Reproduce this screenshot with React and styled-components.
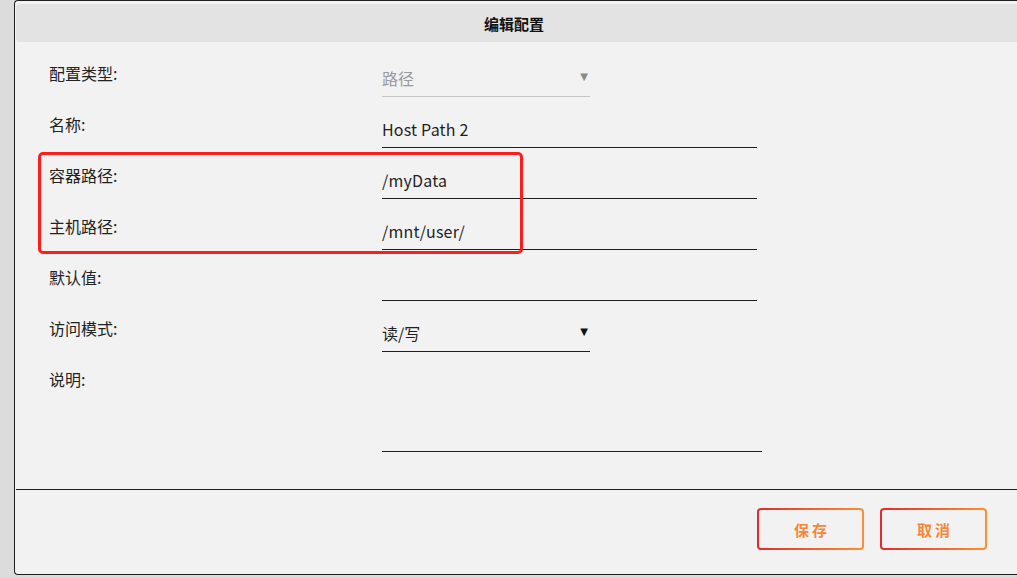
import React from 'react';
import styled, { createGlobalStyle } from 'styled-components';

const textColor = '#1f1f1f';
const panelBg = '#f2f2f2';
const pageBg = '#dcdcdc';

const GlobalStyle = createGlobalStyle`
  html, body {
    margin: 0;
    padding: 0;
    background: ${pageBg};
  }
  body {
    font-family: "Liberation Sans Narrow", "Noto Sans CJK SC", sans-serif;
    color: ${textColor};
  }
`;

const Page = styled.div`
  width: 1017px;
  height: 578px;
  overflow: hidden;
  padding-left: 14px;
  box-sizing: border-box;
`;

const Dialog = styled.div`
  position: relative;
  width: 1020px;
  height: 575px;
  box-sizing: border-box;
  background: ${panelBg};
  border: 1px solid #1e1e1e;
  border-right: none;
  border-radius: 4px 0 0 4px;
  display: flex;
  flex-direction: column;
`;

const Header = styled.div`
  margin: 3px 0 0 1px;
  height: 38px;
  background: #e3e3e3;
  border-radius: 4px;
  display: flex;
  align-items: center;
  justify-content: center;
  padding-right: 22px;
  font-family: "Noto Sans CJK SC", sans-serif;
  font-size: 15px;
  font-weight: 700;
  color: #111;
`;

const Form = styled.div`
  padding: 7px 0 0 34px;
  display: flex;
  flex-direction: column;
  height: 440px;
  box-sizing: border-box;
`;

const Row = styled.div`
  display: flex;
  align-items: flex-start;
  height: 51px;
  flex-shrink: 0;
`;

const Label = styled.div`
  width: 333px;
  padding-top: 14px;
  font-family: "Noto Sans CJK SC", sans-serif;
  font-size: 16px;
  line-height: 20px;
  color: #222;
`;

const Field = styled.div`
  width: ${p => p.w}px;
  height: ${p => p.h || 47}px;
  border-bottom: 1px solid ${p => (p.disabled ? '#c6c6c6' : '#1e1e1e')};
  display: flex;
  align-items: flex-start;
  justify-content: space-between;
  line-height: 20px;
  color: ${p => (p.disabled ? '#9a9a9a' : textColor)};
`;

const FieldText = styled.span`
  padding-top: 19px;
  font-family: ${p => (p.cjk ? '"Noto Sans CJK SC", sans-serif' : '"Liberation Sans Narrow", "Noto Sans CJK SC", sans-serif')};
  font-size: 16px;
  letter-spacing: ${p => (p.cjk ? 0 : 0.2)}px;
`;

const Arrow = styled.span`
  padding-top: 18px;
  padding-right: 2px;
  font-size: 10px;
  color: ${p => (p.disabled ? '#8a8a8a' : '#111')};
  font-family: "DejaVu Sans", sans-serif;
`;

const Highlight = styled.div`
  position: absolute;
  left: 23px;
  top: 151px;
  width: 485px;
  height: 102px;
  box-sizing: border-box;
  border: 3px solid #fd1d1d;
  border-radius: 5px;
  pointer-events: none;
`;

const Divider = styled.div`
  margin-left: 1px;
  height: 1px;
  background: #1e1e1e;
  margin-top: 7px;
`;

const Footer = styled.div`
  display: flex;
  justify-content: flex-end;
  gap: 16px;
  padding: 18px 47px 0 0;
`;

const ActionButton = styled.button`
  width: 107px;
  height: 42px;
  border: 2px solid transparent;
  border-radius: 4px;
  background:
    linear-gradient(${panelBg}, ${panelBg}) padding-box,
    linear-gradient(90deg, #e42a2a, #ff8f33) border-box;
  color: #f68738;
  font-family: "Noto Sans CJK SC", sans-serif;
  font-size: 15px;
  font-weight: 700;
  letter-spacing: 3px;
  text-indent: 3px;
  cursor: pointer;
`;

const rows = [
  { label: '配置类型:', value: '路径', select: true, disabled: true, w: 208, cjk: true },
  { label: '名称:', value: 'Host Path 2', w: 375 },
  { label: '容器路径:', value: '/myData', w: 375 },
  { label: '主机路径:', value: '/mnt/user/', w: 375 },
  { label: '默认值:', value: '', w: 375 },
  { label: '访问模式:', value: '读/写', select: true, w: 208, cjk: true },
];

const App = () => (
  <>
    <GlobalStyle />
    <Page>
      <Dialog>
        <Header>编辑配置</Header>
        <Form>
          {rows.map(r => (
            <Row key={r.label}>
              <Label>{r.label}</Label>
              <Field w={r.w} disabled={r.disabled}>
                <FieldText cjk={r.cjk}>{r.value}</FieldText>
                {r.select && <Arrow disabled={r.disabled}>▼</Arrow>}
              </Field>
            </Row>
          ))}
          <Row>
            <Label>说明:</Label>
            <Field w={380} h={96} />
          </Row>
        </Form>
        <Divider />
        <Footer>
          <ActionButton>保存</ActionButton>
          <ActionButton>取消</ActionButton>
        </Footer>
        <Highlight />
      </Dialog>
    </Page>
  </>
);

export default App;
